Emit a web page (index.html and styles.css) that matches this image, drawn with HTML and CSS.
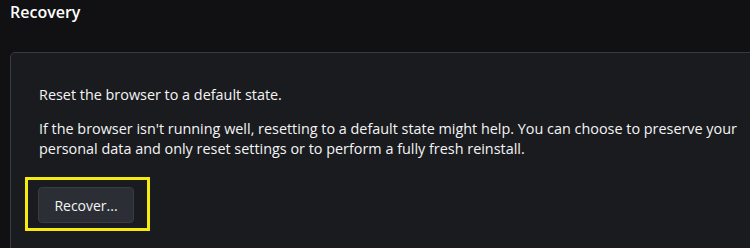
FILE: index.html
```html
<!DOCTYPE html>
<html lang="en">
<head>
<meta charset="utf-8">
<title>Recovery</title>
<link rel="stylesheet" href="styles.css">
</head>
<body>
<main class="page">
  <h2 class="section-title">Recovery</h2>
  <section class="card">
    <p class="lead">Reset the browser to a default state.</p>
    <p class="desc">If the browser isn't running well, resetting to a default state might help. You can choose to preserve your<br>personal data and only reset settings or to perform a fully fresh reinstall.</p>
    <div class="highlight">
      <button class="btn" type="button">Recover...</button>
    </div>
  </section>
</main>
</body>
</html>
```

FILE: styles.css
```css
html, body {
  margin: 0;
  padding: 0;
  background: #111114;
  overflow: hidden;
}
.page {
  padding: 1px 0 0 10px;
  font-family: "Open Sans", "Noto Sans", sans-serif;
  color: #f4f4f4;
  height: 248px;
  box-sizing: border-box;
  overflow: hidden;
}
.section-title {
  margin: 0;
  font-size: 16px;
  font-weight: 600;
  line-height: 22px;
  color: #ffffff;
}
.card {
  margin-top: 29px;
  margin-right: -20px;
  background: #1a1b1f;
  border: 1px solid #393b40;
  border-radius: 5px;
  padding: 31px 28px 30px 28px;
  height: 200px;
}
.lead {
  margin: 0;
  font-size: 14.4px;
  line-height: 21px;
}
.desc {
  margin: 14px 0 0 0;
  font-size: 14.4px;
  line-height: 20px;
}
.highlight {
  display: inline-block;
  margin: 18px 0 0 -14px;
  border: 3px solid #f5eb10;
  padding: 7px 13px 5px 10px;
}
.btn {
  display: block;
  font-family: inherit;
  font-size: 14px;
  color: #f4f4f4;
  background: #2b2f35;
  border: 1px solid #383c43;
  border-radius: 4px;
  padding: 0 14px;
  height: 36px;
  width: 96px;
}
```
